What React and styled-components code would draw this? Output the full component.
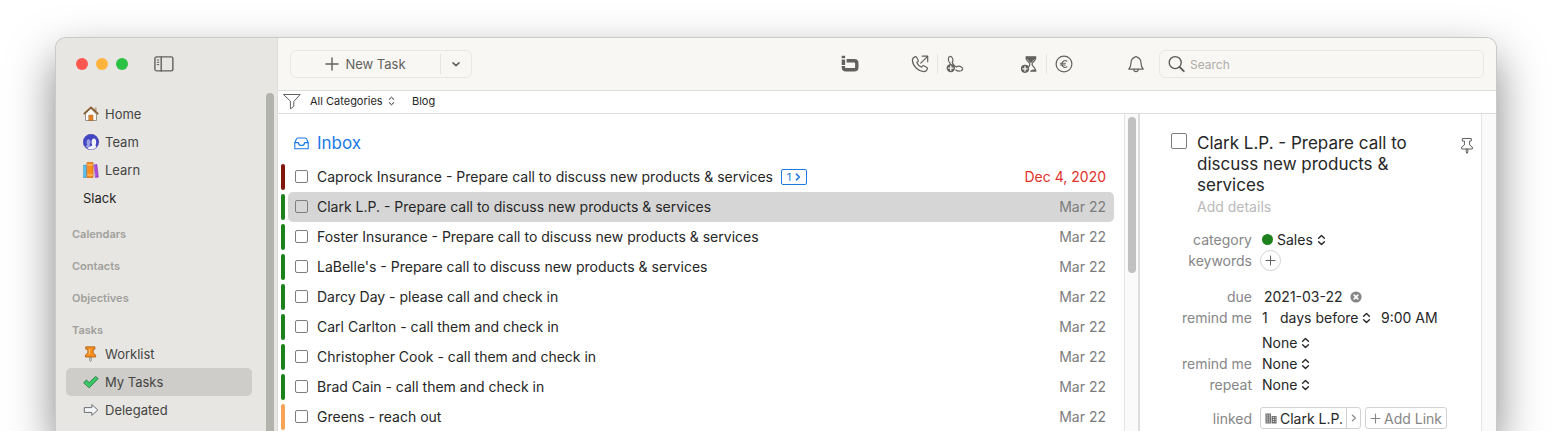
import React, { useState } from 'react';
import styled, { createGlobalStyle } from 'styled-components';

const GlobalStyle = createGlobalStyle`
  * {
    box-sizing: border-box;
  }

  body {
    margin: 0;
    background: #ffffff;
    color: #262626;
    font-family: Inter, 'Liberation Sans', sans-serif;
    font-size: 14px;
  }

  button,
  input,
  select {
    font: inherit;
    color: inherit;
  }
`;

const Page = styled.div`
  height: 100vh;
  min-height: 240px;
  padding: 38px 56px 0;
  overflow: hidden;
  display: flex;
`;

const Window = styled.div`
  flex: 1;
  min-width: 0;
  display: flex;
  border-radius: 10px 10px 0 0;
  box-shadow: 0 0 0 1px #c9c9c9, 0 20px 46px rgba(0, 0, 0, 0.5);
`;

/* Sidebar */

const Sidebar = styled.aside`
  flex: 0 0 222px;
  display: flex;
  flex-direction: column;
  background: #e7e6e2;
  border-radius: 10px 0 0 0;
  border-right: 1px solid #dfdedb;
`;

const TitleBar = styled.div`
  flex: 0 0 52px;
  display: flex;
  align-items: center;
  gap: 8px;
  padding-left: 20px;
`;

const TrafficLight = styled.button`
  width: 12px;
  height: 12px;
  padding: 0;
  border: none;
  border-radius: 50%;
  background: ${({ $color }) => $color};
`;

const IconButton = styled.button`
  display: flex;
  align-items: center;
  justify-content: center;
  padding: 0;
  border: none;
  background: none;
  color: #62615e;
  cursor: pointer;
`;

const SidebarToggle = styled(IconButton)`
  margin-left: 18px;
`;

const SidebarBody = styled.div`
  flex: 1;
  min-height: 0;
  display: flex;
  padding-right: 3px;
`;

const Nav = styled.nav`
  flex: 1;
  padding: 10px 14px 0 10px;
  overflow: hidden;
`;

const NavItem = styled.a`
  display: flex;
  align-items: center;
  gap: 6px;
  height: 28px;
  padding-left: 17px;
  border-radius: 5px;
  color: ${({ $strong }) => ($strong ? '#1f1f1f' : '#454543')};
  background: ${({ $active }) => ($active ? '#cecdc9' : 'transparent')};
  font-size: 13px;
  text-decoration: none;
`;

const NavHeading = styled.h3`
  margin: 12px 0 0;
  padding-left: 6px;
  color: #a09f9b;
  font-size: 11px;
  font-weight: 600;
  line-height: 20px;
`;

const SidebarThumb = styled.div`
  flex: 0 0 8px;
  margin-top: 3px;
  border-radius: 4px 4px 0 0;
  background: #b3b3ae;
`;

/* Toolbar */

const Main = styled.main`
  flex: 1;
  min-width: 0;
  display: flex;
  flex-direction: column;
  background: #ffffff;
  border-radius: 0 10px 0 0;
`;

const Toolbar = styled.header`
  flex: 0 0 53px;
  display: flex;
  align-items: center;
  padding: 0 12px;
  background: #f8f7f3;
  border-bottom: 1px solid #dddddb;
  border-radius: 0 10px 0 0;
`;

const SplitButton = styled.div`
  flex: 0 0 182px;
  display: flex;
  align-items: center;
  height: 28px;
  margin-right: auto;
  border: 1px solid #e8e7e3;
  border-radius: 6px;
`;

const NewTaskButton = styled(IconButton)`
  flex: 1;
  gap: 6px;
  font-size: 13px;
`;

const MenuButton = styled(IconButton)`
  width: 31px;
  height: 20px;
  border-left: 1px solid #e5e4e0;
`;

const ToolGroup = styled.div`
  display: flex;
  align-items: center;
  gap: 8px;
  margin-right: ${({ $gap }) => $gap}px;
`;

const ToolDivider = styled.span`
  width: 1px;
  height: 20px;
  background: #e5e4e0;
`;

const SearchBox = styled.label`
  flex: 0 1 325px;
  display: flex;
  align-items: center;
  gap: 4px;
  height: 28px;
  padding: 0 8px;
  border: 1px solid #e8e7e3;
  border-radius: 6px;
  color: #5c5b59;
`;

const SearchInput = styled.input`
  flex: 1;
  min-width: 0;
  padding: 0;
  border: none;
  outline: none;
  background: none;
  font-size: 12px;

  &::placeholder {
    color: #aeada9;
  }
`;

const FilterBar = styled.div`
  flex: 0 0 23px;
  display: flex;
  align-items: center;
  padding: 0 0 2px 5px;
  border-bottom: 1px solid #dcdcdc;
  font-size: 11px;
`;

const FilterButton = styled(IconButton)`
  margin-right: 9px;
`;

const Picker = styled.span`
  display: inline-flex;
  align-items: center;
  gap: ${({ $gap }) => $gap || 4}px;
`;

const PlainSelect = styled.select`
  appearance: none;
  padding: 0;
  border: none;
  outline: none;
  background: none;
`;

const FilterTag = styled.button`
  margin-left: 17px;
  padding: 0;
  border: none;
  background: none;
`;

/* Task list */

const Content = styled.div`
  flex: 1;
  min-height: 0;
  display: flex;
`;

const ListPane = styled.section`
  flex: 1;
  min-width: 0;
  overflow: hidden;
`;

const ListTitle = styled.h1`
  display: flex;
  align-items: center;
  gap: 8px;
  margin: 0;
  padding: 14px 0 4px 16px;
  color: #1a79e6;
  font-size: 17px;
  font-weight: 400;
  line-height: 30px;
`;

const TaskItems = styled.ul`
  margin: 0;
  padding: 0 10px 0 3px;
  list-style: none;
`;

const TaskRow = styled.li`
  display: flex;
  align-items: center;
  gap: 3px;
  height: 30px;
`;

const CategoryBar = styled.span`
  flex: 0 0 4px;
  height: 26px;
  border-radius: 2px;
  background: ${({ $color }) => $color};
`;

const TaskBody = styled.div`
  flex: 1;
  min-width: 0;
  display: flex;
  align-items: center;
  height: 30px;
  padding: 0 8px 1px 7px;
  border-radius: 5px;
  background: ${({ $selected }) => ($selected ? '#d6d6d6' : 'transparent')};
`;

const TaskLabel = styled.label`
  display: flex;
  align-items: center;
  gap: 9px;
  white-space: nowrap;
`;

const CheckBox = styled.input`
  appearance: none;
  flex: none;
  width: ${({ $size }) => $size || 13}px;
  height: ${({ $size }) => $size || 13}px;
  margin: 0;
  border: 1px solid #7d7d7d;
  border-radius: 2px;

  &:checked {
    background: #1a79e6;
  }
`;

const SubtaskButton = styled.button`
  display: flex;
  align-items: center;
  justify-content: center;
  gap: 4px;
  width: 26px;
  height: 16px;
  margin-left: 8px;
  padding: 0;
  border: 1px solid #1a79e6;
  border-radius: 2px;
  background: none;
  color: #1a79e6;
  font-size: 11px;
`;

const TaskDate = styled.time`
  margin-left: auto;
  color: ${({ $late }) => ($late ? '#e0302b' : '#7c7c7c')};
  white-space: nowrap;
`;

const ScrollTrack = styled.div`
  flex: 0 0 ${({ $width }) => $width}px;
  padding: 3px 2px 3px 3px;
  background: #fafafa;
  border-left: 1px solid #e4e4e4;
`;

const ScrollThumb = styled.div`
  width: 8px;
  height: 50%;
  border-radius: 4px;
  background: #c1c1c1;
`;

/* Detail pane */

const DetailPane = styled.section`
  flex: 0 0 343px;
  min-width: 0;
  padding-top: 19px;
  border-left: 2px solid #dcdcdc;
  overflow: hidden;
`;

const DetailHeader = styled.div`
  display: flex;
  align-items: flex-start;
  gap: 10px;
  padding: 0 7px 0 31px;
`;

const DetailHeading = styled.div`
  flex: 1;
`;

const DetailTitle = styled.h2`
  max-width: 240px;
  margin: 0;
  font-size: 17px;
  font-weight: 400;
  line-height: 21px;
`;

const DetailNotes = styled.input`
  display: block;
  width: 100%;
  height: 21px;
  padding: 0;
  border: none;
  outline: none;
  background: none;

  &::placeholder {
    color: #b9b9b9;
  }
`;

const PinButton = styled(IconButton)`
  margin-top: 4px;
`;

const FieldGroup = styled.div`
  margin-top: ${({ $top }) => $top}px;
`;

const Field = styled.div`
  display: grid;
  grid-template-columns: 112px 1fr;
  align-items: center;
  column-gap: 8px;
  height: 21px;
`;

const FieldLabel = styled.label`
  color: #868686;
  text-align: right;
`;

const FieldValue = styled.div`
  display: flex;
  align-items: center;
  gap: ${({ $gap }) => $gap || 0}px;
  padding-left: ${({ $inset }) => $inset || 0}px;
`;

const CategoryDot = styled.span`
  width: 11px;
  height: 11px;
  border-radius: 50%;
  background: #1d821d;
`;

const FieldInput = styled.input`
  width: ${({ $width }) => $width}px;
  padding: 0;
  border: none;
  outline: none;
  background: none;
`;

const AddKeyword = styled(IconButton)`
  width: 21px;
  height: 21px;
  border: 1px solid #d2d2d2;
  border-radius: 50%;
`;

const LinkBox = styled.div`
  display: flex;
  height: 22px;
  border: 1px solid #d2d2d2;
  border-radius: 3px;
`;

const LinkName = styled.button`
  display: flex;
  align-items: center;
  gap: 3px;
  padding: 0 3px 0 4px;
  border: none;
  background: none;
  white-space: nowrap;
`;

const LinkOpen = styled(IconButton)`
  width: 14px;
  border-left: 1px solid #d2d2d2;
  color: #8a8a8a;
`;

const AddLink = styled(IconButton)`
  gap: 3px;
  height: 22px;
  padding: 0 4px;
  border: 1px solid #d2d2d2;
  border-radius: 3px;
  color: #868686;
  white-space: nowrap;
`;

/* Icons */

const Icon = ({ size = 18, width = size, height = size, stroke = 1.2, children }) => (
  <svg
    width={width}
    height={height}
    viewBox={`0 0 ${width} ${height}`}
    fill="none"
    stroke="currentColor"
    strokeWidth={stroke}
    strokeLinecap="round"
    strokeLinejoin="round"
    aria-hidden="true"
  >
    {children}
  </svg>
);

const PanelIcon = () => (
  <Icon width={20} height={16} stroke={1.4}>
    <rect x="0.9" y="0.9" width="18" height="14" rx="1.8" />
    <path d="M7.2 1V15" />
    <path d="M3.2 4H4.8M3.2 6.3H4.8M3.2 8.6H4.8" strokeWidth="1" />
  </Icon>
);

const HomeIcon = () => (
  <Icon size={16}>
    <rect x="11.6" y="1.5" width="2" height="4" fill="#b9a58c" stroke="none" />
    <path d="M2.5 8V14.5H13.5V8L8 2.6Z" fill="#fbfaf7" stroke="#8e8b86" strokeWidth="0.9" />
    <rect x="6.1" y="9.2" width="3.8" height="5.3" fill="#e9801f" stroke="#9c5b1f" strokeWidth="0.6" />
    <path d="M1.3 7.6L8 1.4L14.7 7.6" stroke="#85592b" strokeWidth="1.7" />
  </Icon>
);

const TeamIcon = () => (
  <Icon size={16}>
    <circle cx="8" cy="8" r="7.7" fill="#4345c4" stroke="#3a3ba4" strokeWidth="0.6" />
    <path d="M2.6 13.2C3 11.6 4 11.3 4.2 10.6C3 8.8 3.4 5.2 5.6 5.2C7.7 5.2 8 8.6 6.8 10.6L7 14Z" fill="#9c9ee0" stroke="none" />
    <path d="M4.4 14.6C5.6 12.4 8.6 12.6 9.2 11.2C8 9 8.4 4.6 10.9 4.6C13.4 4.6 13.7 9 12.5 11.2L13.4 12.9C11.6 15.4 7.4 16.4 4.4 14.6Z" fill="#f2f2fa" stroke="none" />
  </Icon>
);

const BooksIcon = () => (
  <Icon size={16}>
    <rect x="0.5" y="3.4" width="2.8" height="12" fill="#5cc3f0" stroke="#2a8fc6" strokeWidth="0.7" />
    <rect x="4.4" y="0.6" width="5.6" height="14.8" fill="#ff8e1c" stroke="#c9640b" strokeWidth="0.8" />
    <path d="M4.8 3H9.6M4.8 13H9.6" stroke="#ffd097" strokeWidth="0.9" />
    <path d="M11.3 2.9L13.9 2.5L15.3 15.1L12.7 15.5Z" fill="#b04be0" stroke="#7d2bad" strokeWidth="0.6" />
  </Icon>
);

const WorklistIcon = () => (
  <Icon size={16}>
    <path d="M6.8 11V14.6L7.5 15.6L8.2 14.6V11" fill="#f4f4f4" stroke="#777777" strokeWidth="0.8" />
    <path d="M3.1 0.8H11.9V3.2H10.2V7.2L12.6 9V11H2.4V9L4.8 7.2V3.2H3.1Z" fill="#fb8d1a" stroke="#a85c12" strokeWidth="0.8" />
    <path d="M6.4 3.3V7.8" stroke="#ffd08e" strokeWidth="1" />
  </Icon>
);

const CheckIcon = () => (
  <Icon size={16}>
    <path d="M0.9 8.5L3.4 6.1L6.2 8.6L12.6 2.4L15.2 4.6L6.4 13.6Z" fill="#38c765" stroke="#237f41" strokeWidth="0.9" />
  </Icon>
);

const ArrowIcon = () => (
  <Icon size={16}>
    <path d="M1.7 5.6H8.8V2.6L14.8 8L8.8 13.4V10.4H1.7Z" fill="#f4f5f8" stroke="#6c6f76" strokeWidth="1" />
  </Icon>
);

const PlusIcon = ({ size = 14, stroke = 1.4 }) => (
  <Icon size={size} stroke={stroke}>
    <path d={`M${size / 2} 1V${size - 1}M1 ${size / 2}H${size - 1}`} />
  </Icon>
);

const LogoIcon = () => (
  <Icon size={18} stroke={3.4}>
    <rect x="0.7" y="0.8" width="3.4" height="2.4" fill="currentColor" stroke="none" />
    <path d="M2.4 4.6V10" strokeLinecap="butt" />
    <path d="M5.6 5.8H13.2Q15.8 5.8 15.8 8.2V12.4Q15.8 14.8 13.2 14.8H4.8Q2.4 14.8 2.4 12.6V11" strokeLinecap="butt" />
  </Icon>
);

const CallOutIcon = () => (
  <Icon size={18}>
    <path d="M4.5 1.6C3.1 2.1 1.3 3.4 1.4 5.4C1.7 10.9 7.3 16.4 12.7 16.7C14.6 16.7 16 15 16.4 13.6C16.5 13.1 16.3 12.8 15.9 12.5L12.9 10.8C12.4 10.5 11.9 10.6 11.5 11L10.6 12.2C8.8 11.6 6.5 9.3 5.8 7.5L7 6.5C7.4 6.1 7.5 5.7 7.2 5.2L5.5 2C5.3 1.6 5 1.4 4.5 1.6Z" />
    <path d="M9.8 8.1L16.6 1.3M11.2 1.2H16.7V6.7" />
  </Icon>
);

const CallAddIcon = () => (
  <Icon size={18}>
    <path d="M4.4 8.8C2.9 7.2 2 5.1 2.4 3.2C2.8 1.4 4.5 0.9 5.7 2.1C7.1 3.6 7.5 5.9 6.2 7.1C6.4 8.6 8.6 11.2 10.4 11.9C11.6 11 14.2 11.2 15.9 12.4C17.1 13.4 16.7 15.2 15 15.8C13 16.4 11.3 16 9.8 15" />
    <circle cx="4.8" cy="13.1" r="4.2" fill="currentColor" stroke="none" />
    <path d="M4.8 10.8V15.4M2.5 13.1H7.1" stroke="#f8f7f3" strokeWidth="1.3" />
  </Icon>
);

const TimerAddIcon = () => (
  <Icon size={18}>
    <path d="M5.6 1.2H16.2V4.2H5.6Z" fill="currentColor" stroke="none" />
    <path d="M6.4 4C6.6 6.4 9.8 7 9.8 9C9.8 11 8.8 11.4 8.4 12M15.4 4C15.2 6.4 12 7 12 9C12 11.2 15 12 15.2 14.6" />
    <path d="M7.2 4H14.6L11.4 7.8H10.4Z" fill="currentColor" stroke="none" />
    <path d="M10.2 16.6C10.2 14.6 13.8 14 14.8 14.6L16.3 14.8V16.8H9.6Z" fill="currentColor" stroke="none" />
    <circle cx="5" cy="13.8" r="4.1" fill="currentColor" stroke="none" />
    <path d="M5 11.6V16M2.8 13.8H7.2" stroke="#f8f7f3" strokeWidth="1.3" />
  </Icon>
);

const EuroIcon = () => (
  <Icon size={18}>
    <circle cx="9" cy="9" r="7.9" />
    <path d="M11.9 6.2C9.6 4.6 6.9 6.2 6.9 9C6.9 11.8 9.6 13.4 11.9 11.8M5.4 8.2H10.4M5.4 10H10.2" strokeWidth="1.1" />
  </Icon>
);

const BellIcon = () => (
  <Icon size={18}>
    <path d="M1.8 14.2C3.2 12.6 3.8 11.4 3.9 8.6C4 5.2 5.4 3 7.7 2.4C7.9 1.3 10.1 1.3 10.3 2.4C12.6 3 14 5.2 14.1 8.6C14.2 11.4 14.8 12.6 16.2 14.2Z" />
    <path d="M6.8 14.4C6.9 17.3 11.1 17.3 11.2 14.4" />
  </Icon>
);

const SearchIcon = () => (
  <Icon size={18} stroke={1.4}>
    <circle cx="7.2" cy="7.6" r="6" />
    <path d="M11.6 12L15.8 16.2" strokeWidth="1.8" />
  </Icon>
);

const FunnelIcon = () => (
  <Icon size={18} stroke={1}>
    <path d="M0.8 2.5H17.2L10.8 9.5V14.4L7.4 16.8V9.5Z" />
  </Icon>
);

const InboxIcon = () => (
  <Icon width={15} height={13} stroke={1.1}>
    <path d="M0.8 6L2.2 2.2Q2.6 1 3.8 1H11.2Q12.4 1 12.8 2.2L14.2 6V11.8H0.8Z" />
    <path d="M0.8 5.6H4.4C4.6 9.4 10.4 9.4 10.6 5.6H14.2" />
  </Icon>
);

const ChevronDown = () => (
  <Icon size={10} stroke={1.6}>
    <path d="M2 3.8L5 6.6L8 3.8" />
  </Icon>
);

const ChevronRight = ({ stroke = 1.3 }) => (
  <Icon width={6} height={10} stroke={stroke}>
    <path d="M1.4 2.2L4.4 5L1.4 7.8" />
  </Icon>
);

const UpDown = ({ small }) => (
  <Icon width={small ? 7 : 9} height={12} stroke={small ? 1 : 1.4}>
    {small ? <path d="M1.2 4.4L3.5 2.2L5.8 4.4M1.2 7.6L3.5 9.8L5.8 7.6" /> : <path d="M1.6 4.2L4.5 1.6L7.4 4.2M1.6 7.8L4.5 10.4L7.4 7.8" />}
  </Icon>
);

const PinIcon = () => (
  <Icon width={14} height={18} stroke={1}>
    <path d="M2.7 1.5H11.3V4H9.6V8L12.3 10V12H1.7V10L4.4 8V4H2.7Z" />
    <path d="M6.2 12V15L7 16.4L7.8 15V12" />
  </Icon>
);

const ClearIcon = () => (
  <Icon size={12}>
    <circle cx="6" cy="6" r="5.6" fill="#858585" stroke="none" />
    <path d="M4.2 4.2L7.8 7.8M7.8 4.2L4.2 7.8" stroke="#ffffff" strokeWidth="1.7" />
  </Icon>
);

const CompanyIcon = () => (
  <Icon width={12} height={11} stroke={1}>
    <path d="M0.5 0.5H6V10.5H0.5ZM6.6 3H11.6V10.5H6.6Z" fill="#6e6e6e" stroke="none" />
    <path d="M2.2 1.6V10M4.3 1.6V10M8.1 4.4H10.6M8.1 6.4H10.6M8.1 8.4H10.6" stroke="#ffffff" strokeDasharray="1 1" strokeLinecap="butt" />
  </Icon>
);

const GREEN = '#1d821d';

const tasks = [
  { title: 'Caprock Insurance - Prepare call to discuss new products & services', date: 'Dec 4, 2020', color: '#81160c', late: true, subtasks: 1 },
  { title: 'Clark L.P. - Prepare call to discuss new products & services', date: 'Mar 22', color: GREEN },
  { title: 'Foster Insurance - Prepare call to discuss new products & services', date: 'Mar 22', color: GREEN },
  { title: "LaBelle's - Prepare call to discuss new products & services", date: 'Mar 22', color: GREEN },
  { title: 'Darcy Day - please call and check in', date: 'Mar 22', color: GREEN },
  { title: 'Carl Carlton - call them and check in', date: 'Mar 22', color: GREEN },
  { title: 'Christopher Cook - call them and check in', date: 'Mar 22', color: GREEN },
  { title: 'Brad Cain - call them and check in', date: 'Mar 22', color: GREEN },
  { title: 'Greens - reach out', date: 'Mar 22', color: '#f8a355' },
];

const Select = ({ id, label, value, gap, small }) => (
  <Picker $gap={gap}>
    <PlainSelect id={id} aria-label={label} defaultValue={value}>
      <option>{value}</option>
    </PlainSelect>
    <UpDown small={small} />
  </Picker>
);

const AppSidebar = () => (
  <Sidebar>
    <TitleBar>
      <TrafficLight $color="#fe5850" aria-label="Close" />
      <TrafficLight $color="#feb43c" aria-label="Minimize" />
      <TrafficLight $color="#2bc144" aria-label="Zoom" />
      <SidebarToggle aria-label="Toggle sidebar"><PanelIcon /></SidebarToggle>
    </TitleBar>
    <SidebarBody>
      <Nav>
        <NavItem href="#home"><HomeIcon />Home</NavItem>
        <NavItem href="#team"><TeamIcon />Team</NavItem>
        <NavItem href="#learn"><BooksIcon />Learn</NavItem>
        <NavItem href="#slack" $strong>Slack</NavItem>
        <NavHeading>Calendars</NavHeading>
        <NavHeading>Contacts</NavHeading>
        <NavHeading>Objectives</NavHeading>
        <NavHeading>Tasks</NavHeading>
        <NavItem href="#worklist"><WorklistIcon />Worklist</NavItem>
        <NavItem href="#tasks" $active><CheckIcon />My Tasks</NavItem>
        <NavItem href="#delegated"><ArrowIcon />Delegated</NavItem>
      </Nav>
      <SidebarThumb />
    </SidebarBody>
  </Sidebar>
);

const AppToolbar = () => (
  <Toolbar>
    <SplitButton>
      <NewTaskButton><PlusIcon />New Task</NewTaskButton>
      <MenuButton aria-label="More task types"><ChevronDown /></MenuButton>
    </SplitButton>
    <ToolGroup $gap={52}>
      <IconButton aria-label="Assistant"><LogoIcon /></IconButton>
    </ToolGroup>
    <ToolGroup $gap={56}>
      <IconButton aria-label="Call"><CallOutIcon /></IconButton>
      <ToolDivider />
      <IconButton aria-label="Log call"><CallAddIcon /></IconButton>
    </ToolGroup>
    <ToolGroup $gap={54}>
      <IconButton aria-label="Add time"><TimerAddIcon /></IconButton>
      <ToolDivider />
      <IconButton aria-label="Add expense"><EuroIcon /></IconButton>
    </ToolGroup>
    <ToolGroup $gap={14}>
      <IconButton aria-label="Notifications"><BellIcon /></IconButton>
    </ToolGroup>
    <SearchBox>
      <SearchIcon />
      <SearchInput type="search" placeholder="Search" aria-label="Search" />
    </SearchBox>
  </Toolbar>
);

const TaskList = () => {
  const [selected, setSelected] = useState(1);

  return (
    <ListPane>
      <ListTitle><InboxIcon />Inbox</ListTitle>
      <TaskItems>
        {tasks.map((task, index) => (
          <TaskRow key={task.title} onClick={() => setSelected(index)}>
            <CategoryBar $color={task.color} />
            <TaskBody $selected={index === selected}>
              <TaskLabel>
                <CheckBox type="checkbox" />
                {task.title}
              </TaskLabel>
              {task.subtasks && (
                <SubtaskButton>{task.subtasks}<ChevronRight stroke={1.6} /></SubtaskButton>
              )}
              <TaskDate $late={task.late}>{task.date}</TaskDate>
            </TaskBody>
          </TaskRow>
        ))}
      </TaskItems>
    </ListPane>
  );
};

const TaskDetail = () => (
  <DetailPane>
    <DetailHeader>
      <CheckBox type="checkbox" $size={16} aria-label="Complete task" />
      <DetailHeading>
        <DetailTitle>Clark L.P. - Prepare call to discuss new products &amp; services</DetailTitle>
        <DetailNotes placeholder="Add details" aria-label="Details" />
      </DetailHeading>
      <PinButton aria-label="Pin task"><PinIcon /></PinButton>
    </DetailHeader>

    <FieldGroup $top={12}>
      <Field>
        <FieldLabel htmlFor="category">category</FieldLabel>
        <FieldValue $inset={2} $gap={4}>
          <CategoryDot />
          <Select id="category" value="Sales" />
        </FieldValue>
      </Field>
      <Field>
        <FieldLabel htmlFor="keywords">keywords</FieldLabel>
        <FieldValue>
          <AddKeyword id="keywords" aria-label="Add keyword"><PlusIcon size={11} stroke={1} /></AddKeyword>
        </FieldValue>
      </Field>
    </FieldGroup>

    <FieldGroup $top={15}>
      <Field>
        <FieldLabel htmlFor="due">due</FieldLabel>
        <FieldValue $inset={4} $gap={4}>
          <FieldInput id="due" $width={82} defaultValue="2021-03-22" />
          <IconButton aria-label="Clear due date"><ClearIcon /></IconButton>
        </FieldValue>
      </Field>
      <Field>
        <FieldLabel htmlFor="remind-count">remind me</FieldLabel>
        <FieldValue $inset={2} $gap={10}>
          <FieldInput id="remind-count" $width={8} defaultValue="1" />
          <Select label="Reminder unit" value="days before" gap={3} />
          <FieldInput $width={80} defaultValue="9:00 AM" aria-label="Reminder time" />
        </FieldValue>
      </Field>
    </FieldGroup>

    <FieldGroup $top={4}>
      <Field>
        <span />
        <FieldValue $inset={2}><Select label="Reminder type" value="None" gap={3} /></FieldValue>
      </Field>
      <Field>
        <FieldLabel htmlFor="remind-second">remind me</FieldLabel>
        <FieldValue $inset={2}><Select id="remind-second" value="None" gap={3} /></FieldValue>
      </Field>
      <Field>
        <FieldLabel htmlFor="repeat">repeat</FieldLabel>
        <FieldValue $inset={2}><Select id="repeat" value="None" gap={3} /></FieldValue>
      </Field>
    </FieldGroup>

    <FieldGroup $top={12}>
      <Field>
        <FieldLabel htmlFor="linked">linked</FieldLabel>
        <FieldValue $gap={4}>
          <LinkBox>
            <LinkName id="linked"><CompanyIcon />Clark L.P.</LinkName>
            <LinkOpen aria-label="Open link"><ChevronRight /></LinkOpen>
          </LinkBox>
          <AddLink><PlusIcon size={11} stroke={1.1} />Add Link</AddLink>
        </FieldValue>
      </Field>
    </FieldGroup>
  </DetailPane>
);

const App = () => (
  <>
    <GlobalStyle />
    <Page>
      <Window>
        <AppSidebar />
        <Main>
          <AppToolbar />
          <FilterBar>
            <FilterButton aria-label="Filter"><FunnelIcon /></FilterButton>
            <Select label="Category filter" value="All Categories" gap={5} small />
            <FilterTag>Blog</FilterTag>
          </FilterBar>
          <Content>
            <TaskList />
            <ScrollTrack $width={14}><ScrollThumb /></ScrollTrack>
            <TaskDetail />
            <ScrollTrack $width={15} />
          </Content>
        </Main>
      </Window>
    </Page>
  </>
);

export default App;
